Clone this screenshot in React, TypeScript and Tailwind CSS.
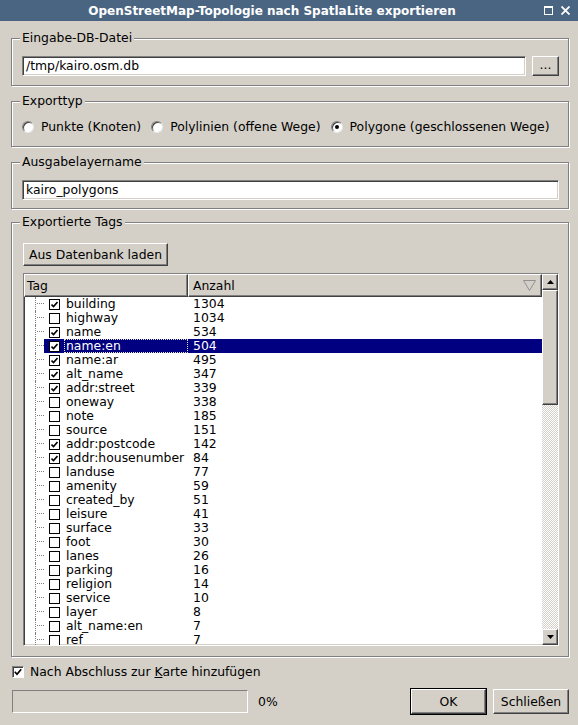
import React from "react";

const tags: [string, string, boolean][] = [
  ["building", "1304", true],
  ["highway", "1034", false],
  ["name", "534", true],
  ["name:en", "504", true],
  ["name:ar", "495", true],
  ["alt_name", "347", true],
  ["addr:street", "339", true],
  ["oneway", "338", false],
  ["note", "185", false],
  ["source", "151", false],
  ["addr:postcode", "142", true],
  ["addr:housenumber", "84", true],
  ["landuse", "77", false],
  ["amenity", "59", false],
  ["created_by", "51", false],
  ["leisure", "41", false],
  ["surface", "33", false],
  ["foot", "30", false],
  ["lanes", "26", false],
  ["parking", "16", false],
  ["religion", "14", false],
  ["service", "10", false],
  ["layer", "8", false],
  ["alt_name:en", "7", false],
  ["ref", "7", false],
];

const raised =
  "bg-[#d4d0c8] border border-t-white border-l-white border-r-[#404040] border-b-[#404040] shadow-[inset_-1px_-1px_0_#808080]";
const sunken =
  "border border-t-[#808080] border-l-[#808080] border-r-white border-b-white shadow-[inset_1px_1px_0_#404040,inset_-1px_-1px_0_#d4d0c8]";

function GroupBox({
  title,
  className,
  children,
}: {
  title: string;
  className: string;
  children: React.ReactNode;
}) {
  return (
    <div
      className={`relative border border-[#808080] shadow-[inset_1px_1px_0_#fff,1px_1px_0_#fff] ${className}`}
    >
      <span className="absolute -top-[8px] left-[8px] bg-[#d4d0c8] px-[2px] leading-[14px]">
        {title}
      </span>
      {children}
    </div>
  );
}

function Check({ on }: { on: boolean }) {
  return (
    <div className="flex h-[11px] w-[11px] shrink-0 items-center justify-center border border-black bg-white">
      {on && (
        <svg width="7" height="7" viewBox="0 0 7 7">
          <path d="M0.5 3.5 L2.5 5.5 L6.5 1" stroke="#000" strokeWidth="1.6" fill="none" />
        </svg>
      )}
    </div>
  );
}

function Radio({ on, label }: { on: boolean; label: string }) {
  return (
    <div className="flex items-center gap-[7px]">
      <div className="flex h-[12px] w-[12px] items-center justify-center rounded-full border border-t-[#808080] border-l-[#808080] border-r-[#e8e8e8] border-b-[#e8e8e8] bg-white shadow-[inset_1px_1px_0_#404040]">
        {on && <div className="h-[4px] w-[4px] rounded-full bg-black" />}
      </div>
      <span>{label}</span>
    </div>
  );
}

function Arrow({ up }: { up: boolean }) {
  return (
    <svg width="7" height="4" viewBox="0 0 7 4">
      <polygon points={up ? "3.5,0 7,4 0,4" : "0,0 7,0 3.5,4"} fill="#000" />
    </svg>
  );
}

export default function App() {
  return (
    <div className="flex h-[725px] w-[578px] flex-col overflow-hidden bg-[#d4d0c8] font-['DejaVu_Sans',sans-serif] text-[12.4px] leading-[14px] text-black">
      {/* Title bar */}
      <div className="flex h-[21px] shrink-0 items-center bg-[#4a6582] text-[12px] text-white">
        <div className="flex-1 pt-[1px] text-center font-bold">
          OpenStreetMap-Topologie nach SpatlaLite exportieren
        </div>
        <div className="flex w-[34px] items-center gap-[8px] pr-[6px]">
          <svg width="9" height="9" viewBox="0 0 9 9">
            <rect x="0.5" y="0.5" width="8" height="8" fill="none" stroke="#fff" />
            <line x1="0" y1="1.5" x2="9" y2="1.5" stroke="#fff" />
          </svg>
          <svg width="9" height="9" viewBox="0 0 9 9">
            <path d="M0.5 0.5 L8.5 8.5 M8.5 0.5 L0.5 8.5" stroke="#fff" strokeWidth="1.8" />
          </svg>
        </div>
      </div>

      <div className="flex flex-1 flex-col pl-[11px] pr-[9px]">
        {/* Eingabe-DB-Datei */}
        <GroupBox title="Eingabe-DB-Datei" className="mt-[17px] h-[48px]">
          <div className="flex gap-[6px] pl-[10px] pr-[9px] pt-[17px]">
            <div className={`${sunken} flex h-[20px] flex-1 items-center bg-white pl-[3px]`}>
              /tmp/kairo.osm.db
            </div>
            <div className={`${raised} flex h-[20px] w-[27px] items-center justify-center pb-[3px]`}>
              ...
            </div>
          </div>
        </GroupBox>

        {/* Exporttyp */}
        <GroupBox title="Exporttyp" className="mt-[15px] h-[46px]">
          <div className="flex gap-[10px] pl-[10px] pt-[18px]">
            <Radio on={false} label="Punkte (Knoten)" />
            <Radio on={false} label="Polylinien (offene Wege)" />
            <Radio on={true} label="Polygone (geschlossenen Wege)" />
          </div>
        </GroupBox>

        {/* Ausgabelayername */}
        <GroupBox title="Ausgabelayername" className="mt-[15px] h-[47px]">
          <div className="pl-[10px] pr-[9px] pt-[17px]">
            <div className={`${sunken} flex h-[20px] items-center bg-white pl-[3px]`}>
              kairo_polygons
            </div>
          </div>
        </GroupBox>

        {/* Exportierte Tags */}
        <GroupBox title="Exportierte Tags" className="mt-[13px] h-[435px]">
          <div className="flex flex-col pl-[11px] pr-[9px] pt-[20px]">
            <div className={`${raised} flex h-[23px] w-[145px] items-center justify-center`}>
              Aus Datenbank laden
            </div>
            <div className={`${sunken} mt-[7px] flex h-[373px] overflow-hidden bg-white`}>
              <div className="flex min-w-0 flex-1 flex-col">
                {/* Header */}
                <div className="flex h-[23px] shrink-0">
                  <div className={`${raised} flex w-[164px] items-center pl-[2px]`}>Tag</div>
                  <div className={`${raised} flex flex-1 items-center justify-between pl-[4px] pr-[5px]`}>
                    <span>Anzahl</span>
                    <svg width="13" height="11" viewBox="0 0 13 11">
                      <polygon points="0.5,0.5 12.5,0.5 6.5,10.5" fill="none" stroke="#909090" />
                    </svg>
                  </div>
                </div>
                {/* Rows */}
                <div className="flex-1 overflow-hidden">
                  {tags.map(([name, count, on]) => {
                    const sel = name === "name:en";
                    return (
                      <div key={name} className="flex h-[14px]">
                        <div className="ml-[11px] h-full w-[9px] shrink-0 border-l border-dotted border-[#808080]">
                          <div className="ml-[1px] mt-[6px] w-[7px] border-t border-dotted border-[#808080]" />
                        </div>
                        <div
                          className={`flex flex-1 items-center pl-[5px] ${sel ? "bg-[#000080] text-white" : ""}`}
                        >
                          <Check on={on} />
                          <div
                            className={`ml-[4px] flex h-full w-[124px] items-center pl-[1px] ${sel ? "border border-dotted border-[#e8e8c8]" : "border border-transparent"}`}
                          >
                            {name}
                          </div>
                          <div className="pl-[5px]">{count}</div>
                        </div>
                      </div>
                    );
                  })}
                </div>
              </div>
              {/* Scrollbar */}
              <div className="flex w-[16px] shrink-0 flex-col">
                <div className={`${raised} flex h-[16px] items-center justify-center`}>
                  <Arrow up />
                </div>
                <div className={`${raised} h-[115px]`} />
                <div className="flex-1 bg-[repeating-conic-gradient(#fff_0_25%,#d4d0c8_0_50%)] bg-[length:2px_2px]" />
                <div className={`${raised} flex h-[16px] items-center justify-center`}>
                  <Arrow up={false} />
                </div>
              </div>
            </div>
          </div>
        </GroupBox>

        {/* Add to map */}
        <div className="ml-[1px] mt-[9px] flex h-[12px] items-center gap-[6px]">
          <div className="flex h-[12px] w-[12px] items-center justify-center border border-t-[#808080] border-l-[#808080] border-r-white border-b-white bg-white shadow-[inset_1px_1px_0_#404040]">
            <svg width="8" height="8" viewBox="0 0 8 8">
              <path d="M0.8 3.8 L3 6.2 L7.2 1.2" stroke="#000" strokeWidth="1.7" fill="none" />
            </svg>
          </div>
          <span>
            Nach Abschluss zur <span className="underline">K</span>arte hinzufügen
          </span>
        </div>

        {/* Progress + buttons */}
        <div className="mt-[10px] flex h-[27px] items-center">
          <div className="ml-[1px] h-[23px] w-[236px] border border-t-[#808080] border-l-[#808080] border-r-white border-b-white" />
          <span className="ml-[10px]">0%</span>
          <div className="flex-1" />
          <div className="h-[27px] w-[77px] border border-black">
            <div className={`${raised} flex h-full items-center justify-center`}>OK</div>
          </div>
          <div className={`${raised} ml-[6px] flex h-[25px] w-[76px] items-center justify-center`}>
            Schließen
          </div>
        </div>
      </div>
    </div>
  );
}
